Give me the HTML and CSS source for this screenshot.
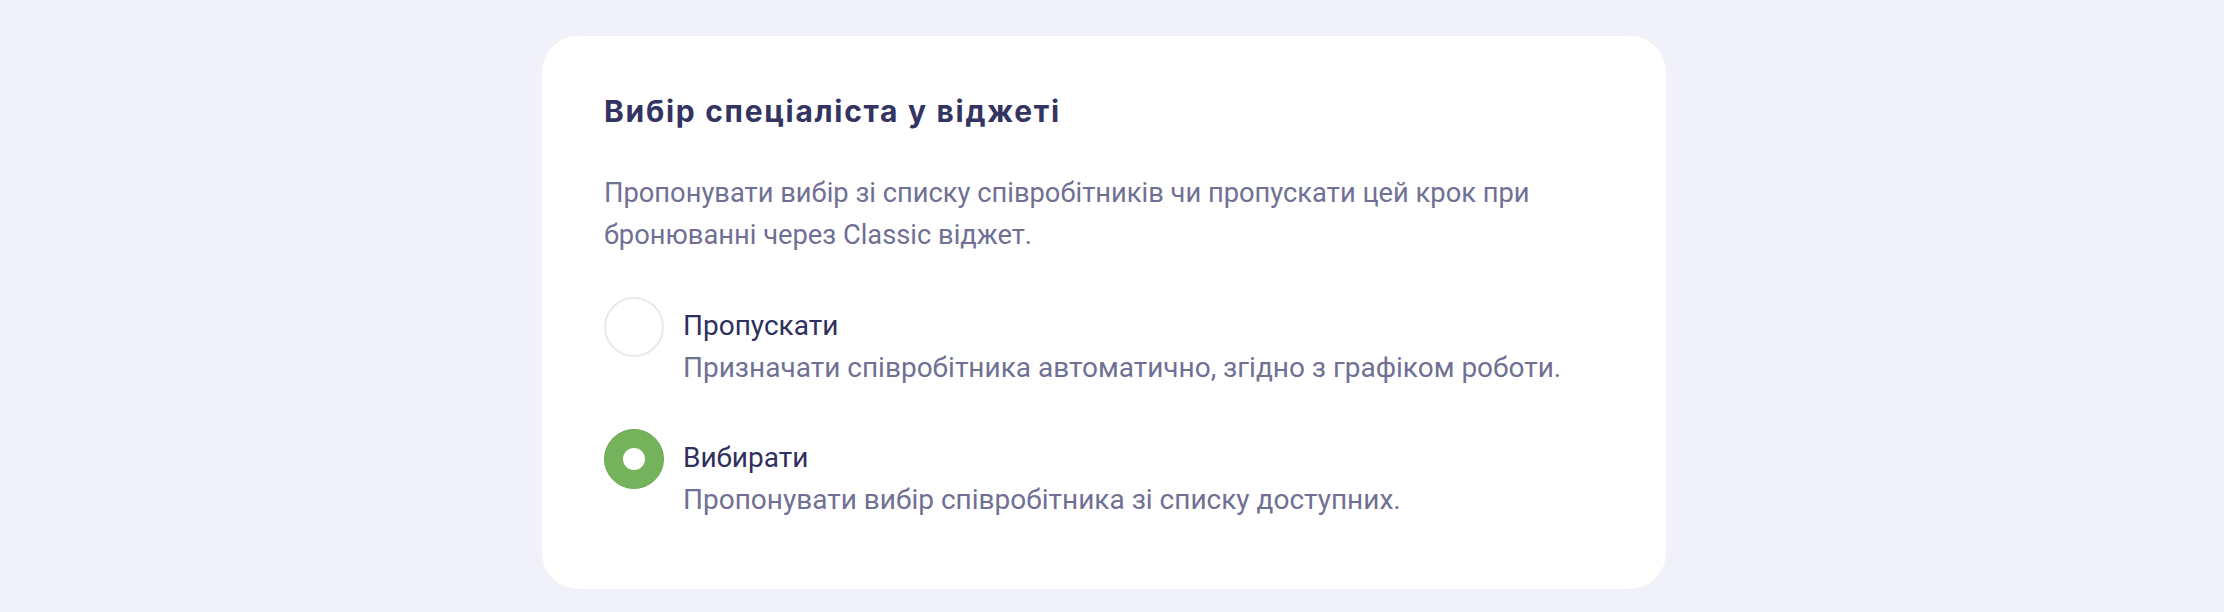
FILE: index.html
```html
<!DOCTYPE html>
<html lang="uk">
<head>
  <meta charset="UTF-8">
  <title>Вибір спеціаліста у віджеті</title>
  <link rel="stylesheet" href="styles.css">
</head>
<body>
  <section class="card">
    <h2 class="card-title">Вибір спеціаліста у віджеті</h2>
    <p class="card-text">Пропонувати вибір зі списку співробітників чи пропускати цей крок при<br>бронюванні через Classic віджет.</p>

    <label class="option">
      <input type="radio" name="staffStep" value="skip">
      <span class="radio"></span>
      <span class="option-body">
        <span class="option-title">Пропускати</span>
        <span class="option-desc">Призначати співробітника автоматично, згідно з графіком роботи.</span>
      </span>
    </label>

    <label class="option">
      <input type="radio" name="staffStep" value="choose" checked>
      <span class="radio"></span>
      <span class="option-body">
        <span class="option-title">Вибирати</span>
        <span class="option-desc">Пропонувати вибір співробітника зі списку доступних.</span>
      </span>
    </label>
  </section>
</body>
</html>
```

FILE: styles.css
```css
body {
  margin: 0;
  padding: 36px 558px 23px 542px;
  background: #f1f1f9;
  font-family: Roboto, "Noto Sans", sans-serif;
}
.card {
  background: #fff;
  border-radius: 36px;
  padding: 57px 62px 68px;
}
.card-title {
  margin: 0;
  font-family: Inter, "Noto Sans", sans-serif;
  font-weight: 700;
  font-size: 30px;
  line-height: 36px;
  letter-spacing: 1.7px;
  color: #333461;
}
.card-text {
  margin: 43px 0 41px;
  font-size: 27.3px;
  line-height: 42px;
  color: #6f7094;
}
.option {
  display: flex;
  align-items: flex-start;
  gap: 19px;
  cursor: pointer;
}
.option + .option {
  margin-top: 40px;
}
.option input {
  display: none;
}
.radio {
  flex: none;
  box-sizing: border-box;
  width: 60px;
  height: 60px;
  border: 2px solid #e8e8ef;
  border-radius: 50%;
  display: flex;
  align-items: center;
  justify-content: center;
}
.option input:checked + .radio {
  background: #74b35b;
  border: 1px solid #6aa852;
}
.option input:checked + .radio::after {
  content: "";
  width: 22px;
  height: 22px;
  border-radius: 50%;
  background: #fff;
}
.option-body {
  display: flex;
  flex-direction: column;
  padding-top: 8px;
  font-size: 28px;
  line-height: 42px;
}
.option-title {
  color: #2e2f5d;
}
.option-desc {
  color: #6f7094;
}
```
